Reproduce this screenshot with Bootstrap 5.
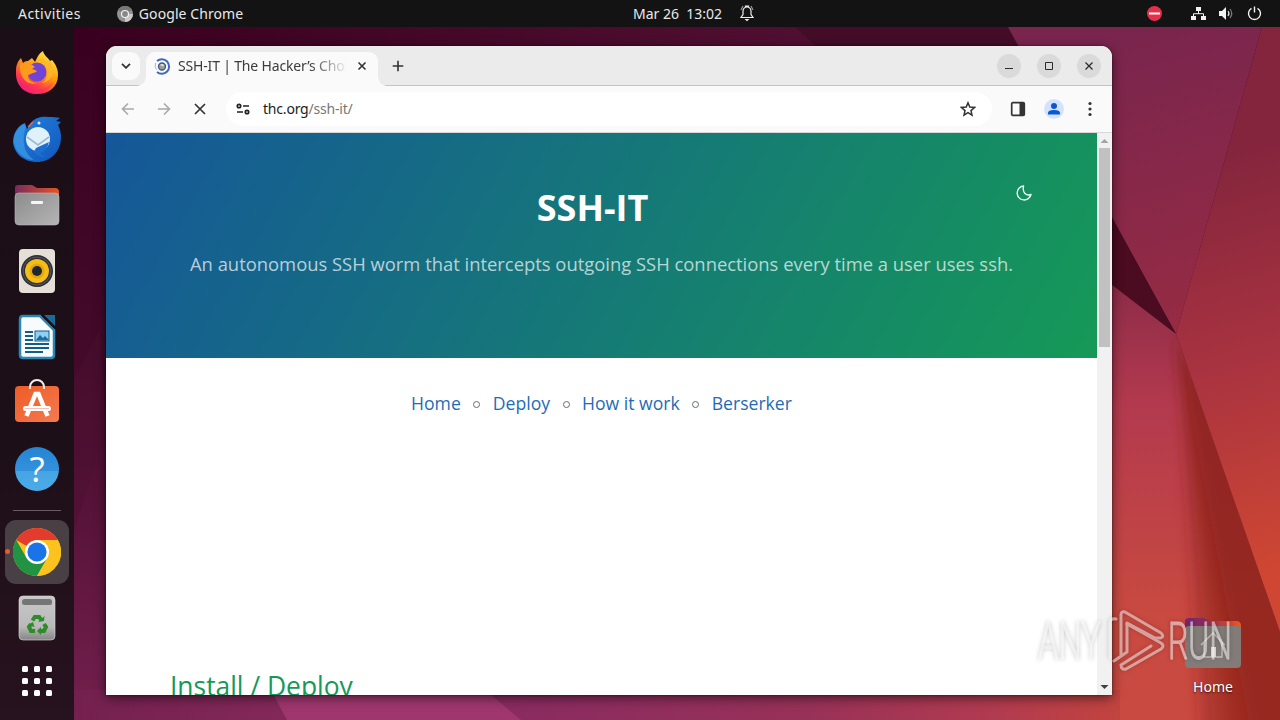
<!DOCTYPE html>
<html lang="en">
<head>
  <meta charset="UTF-8">
  <title>SSH-IT | The Hacker's Choice</title>
  <meta name="viewport" content="width=device-width, initial-scale=1" />
  <link href="https://cdn.jsdelivr.net/npm/bootstrap@5.3.0/dist/css/bootstrap.min.css" rel="stylesheet" />
  <style>
    body {
      height: 720px;
      overflow: hidden;
      background-color: #3a0722;
      font-family: 'Noto Sans', 'Open Sans', sans-serif;
      font-size: 14px;
    }
    svg {
      display: block;
      flex-shrink: 0;
    }
    .wallpaper {
      position: absolute;
      inset: 0;
    }
    .topbar {
      height: 27px;
      background-color: #131313;
      color: #e9e9e9;
      position: relative;
      padding: 0 18px;
    }
    .activities {
      letter-spacing: .45px;
    }
    .app-menu {
      margin-left: 36px;
      gap: 6px;
      letter-spacing: .08px;
    }
    .clock {
      position: absolute;
      left: 633px;
      top: 0;
      height: 26px;
      white-space: pre;
    }
    .clock svg {
      margin-left: 17px;
    }
    .tray {
      gap: 12px;
    }
    .tray-dnd {
      margin-right: 17px;
    }
    .dock {
      width: 74px;
      height: 693px;
      padding-top: 13px;
      background: linear-gradient(#1b0e17, #1d0f17 60%, #27121f);
      position: relative;
    }
    .dock-item {
      height: 66px;
      width: 74px;
    }
    .dock-line {
      width: 48px;
      height: 1px;
      background-color: #655d63;
      margin: 8px 0;
    }
    .dock-apps {
      height: 60px;
    }
    .dock-active {
      position: relative;
    }
    .dock-active .tile {
      width: 64px;
      height: 64px;
      border-radius: 11px;
      background-color: #494045;
    }
    .dock-active::before {
      content: "";
      position: absolute;
      left: 5px;
      top: 30px;
      width: 5px;
      height: 5px;
      border-radius: 50%;
      background-color: #f0562c;
    }
    .help-disc {
      width: 44px;
      height: 44px;
      border-radius: 50%;
      background: linear-gradient(#2585d3, #3390dc 55%, #46a4e3 55%, #4babe9);
      color: #fff;
      font-family: 'Open Sans', sans-serif;
      font-size: 35px;
      line-height: 44px;
    }
    .browser {
      position: absolute;
      left: 106px;
      top: 46px;
      width: 1006px;
      height: 649px;
      border-radius: 11px 11px 0 0;
      background-color: #fff;
      box-shadow: 0 3px 12px rgba(0, 0, 0, .55), 0 0 2px rgba(0, 0, 0, .6);
    }
    .tabstrip {
      height: 40px;
      background-color: #ebebeb;
      border-bottom: 1px solid #c4c4c4;
      padding: 0 11px 0 6px;
    }
    .tab-search {
      width: 28px;
      height: 28px;
      border-radius: 9px;
      background-color: #fafafa;
    }
    .active-tab {
      width: 232px;
      height: 34px;
      margin: 6px 0 -1px 6px;
      padding: 0 11px 6px 8px;
      border-radius: 9px 9px 0 0;
      background-color: #fafafa;
      position: relative;
    }
    .active-tab::before,
    .active-tab::after {
      content: "";
      position: absolute;
      bottom: 0;
      width: 9px;
      height: 9px;
    }
    .active-tab::before {
      left: -9px;
      background: radial-gradient(circle at 0 0, transparent 8.5px, #fafafa 9px);
    }
    .active-tab::after {
      right: -9px;
      background: radial-gradient(circle at 100% 0, transparent 8.5px, #fafafa 9px);
    }
    .tab-title {
      width: 168px;
      margin-left: 7px;
      padding-bottom: 2px;
      overflow: hidden;
      white-space: nowrap;
      color: #3c3c3c;
      letter-spacing: -.17px;
      -webkit-mask-image: linear-gradient(to right, #000 132px, transparent 170px);
    }
    .new-tab {
      margin-left: 14px;
    }
    .win-btn {
      width: 24px;
      height: 24px;
      border-radius: 50%;
      background-color: #dadada;
    }
    .toolbar {
      height: 47px;
      background-color: #fafafa;
      border-bottom: 1px solid #d8d8d8;
      padding: 0 14px;
    }
    .nav-icons {
      gap: 20px;
    }
    .address {
      width: 766px;
      height: 34px;
      margin: 0 18px;
      border-radius: 17px;
      background-color: #fff;
      padding: 0 16px 0 10px;
      color: #777;
    }
    .address span {
      margin-left: 13px;
      padding-bottom: 2px;
      letter-spacing: -.2px;
    }
    .address b {
      font-weight: 400;
      color: #1b1b1b;
    }
    .profile {
      margin-left: 18px;
    }
    .viewport {
      height: 562px;
    }
    .site {
      width: 991px;
      overflow: hidden;
      font-family: 'Open Sans', sans-serif;
    }
    .site-header {
      height: 225px;
      background: linear-gradient(120deg, #155799, #159957);
      color: #fff;
      padding-top: 48px;
      position: relative;
    }
    .site-header h1 {
      font-size: 36px;
      font-weight: 700;
      line-height: 54px;
      margin: 0 18px 0 0;
    }
    .site-header p {
      font-size: 18.4px;
      line-height: 28px;
      margin-top: 15px;
      color: rgba(255, 255, 255, .7);
    }
    .theme-toggle {
      position: absolute;
      left: 909px;
      top: 51px;
    }
    .site-nav {
      padding-top: 31px;
      font-size: 17.6px;
      line-height: 28px;
    }
    .site-nav a {
      color: #1e6bb8;
      text-decoration: none;
    }
    .dot {
      width: 7px;
      height: 7px;
      border: 1px solid #606c71;
      border-radius: 50%;
      margin: 2px 12.5px 0;
    }
    .site h2 {
      font-size: 26.4px;
      font-weight: 400;
      color: #159957;
      line-height: 36px;
      margin: 251px 0 0 64px;
    }
    .scroller {
      width: 15px;
      background-color: #f1f1f1;
    }
    .thumb {
      width: 11px;
      height: 199px;
      background-color: #c1c1c1;
    }
    .desktop-icon {
      position: absolute;
      left: 1173px;
      top: 615px;
      width: 80px;
      gap: 7px;
      color: #fff;
      text-shadow: 0 1px 2px rgba(0, 0, 0, .7);
    }
    .watermark {
      position: absolute;
      left: 1030px;
      top: 600px;
      filter: drop-shadow(0 0 2px rgba(0, 0, 0, .4));
    }
  </style>
</head>
<body>
<svg class="wallpaper" width="1280" height="720">
  <defs>
    <linearGradient id="base" x1="0" y1="0" x2="0" y2="1">
      <stop offset="0" stop-color="#39001f" />
      <stop offset=".5" stop-color="#430a2a" />
      <stop offset="1" stop-color="#74204e" />
    </linearGradient>
    <linearGradient id="topEdge">
      <stop offset="0" stop-color="#39001f" />
      <stop offset="1" stop-color="#521033" />
    </linearGradient>
    <linearGradient id="upper" gradientUnits="userSpaceOnUse" x1="1110" y1="40" x2="1190" y2="330">
      <stop offset="0" stop-color="#7a254e" />
      <stop offset="1" stop-color="#962b43" />
    </linearGradient>
    <linearGradient id="right" gradientUnits="userSpaceOnUse" x1="1200" y1="160" x2="1310" y2="560">
      <stop offset="0" stop-color="#84253d" />
      <stop offset=".5" stop-color="#a93340" />
      <stop offset="1" stop-color="#cf4732" />
    </linearGradient>
    <linearGradient id="lower" gradientUnits="userSpaceOnUse" x1="1130" y1="290" x2="1130" y2="620">
      <stop offset="0" stop-color="#8f2c49" />
      <stop offset=".35" stop-color="#b33a4e" />
      <stop offset="1" stop-color="#c94a40" />
    </linearGradient>
    <linearGradient id="bottom">
      <stop offset="0" stop-color="#74204e" />
      <stop offset=".2" stop-color="#83295a" />
      <stop offset=".45" stop-color="#8b2c60" />
      <stop offset=".7" stop-color="#983158" />
      <stop offset=".88" stop-color="#b13b50" />
      <stop offset="1" stop-color="#c2443f" />
    </linearGradient>
    <clipPath id="foldClip">
      <path d="M1176 334L1112 300v420h168v-88z" />
    </clipPath>
    <filter id="soft" filterUnits="userSpaceOnUse" x="1100" y="300" width="300" height="500">
      <feGaussianBlur stdDeviation="6" />
    </filter>
  </defs>
  <rect width="1280" height="720" fill="url(#base)" />
  <rect x="74" y="27" width="780" height="30" fill="url(#topEdge)" />
  <path d="M106 430L74 530V380L100 330z" fill="#4c1030" opacity=".5" />
  <path d="M795 27h215l166 307-340-270z" fill="#430d27" />
  <path d="M1008 27h254l-86 307z" fill="url(#upper)" />
  <path d="M1262 27h18v605l-104-298z" fill="url(#right)" />
  <path d="M1090 180l86 154-86-66z" fill="#4b0b20" />
  <path d="M1176 334L1090 268V720h190v-88z" fill="url(#lower)" />
  <!-- shadow on the left side of the fold, built up in wedges -->
  <g clip-path="url(#foldClip)">
    <g fill="#8a2018" filter="url(#soft)">
      <path d="M1176 334l24 426h160v-70z" opacity=".3" />
      <path d="M1176 334l40 426h150v-70z" opacity=".3" />
      <path d="M1176 334l60 426h130v-70z" opacity=".35" />
      <path d="M1176 334l80 426h110v-70z" opacity=".4" />
    </g>
  </g>
  <rect x="74" y="690" width="1046" height="30" fill="url(#bottom)" />
  <path d="M271 690l16 30h234l-36-30z" fill="#a0366e" />
</svg>

<div class="topbar d-flex align-items-center">
  <span class="activities">Activities</span>
  <div class="app-menu d-flex align-items-center">
    <svg width="16" height="16" viewBox="0 0 16 16">
      <circle cx="8" cy="8" r="8" fill="#929292" />
      <path d="M8 8L1 4a8 8 0 0 1 14 0z" fill="#777" />
      <path d="M8 8h8a8 8 0 0 1-8 8z" fill="#c9c9c9" />
      <circle cx="8" cy="8" r="3.5" fill="#888" stroke="#f2f2f2" stroke-width="1.2" />
    </svg>
    <span>Google Chrome</span>
  </div>
  <div class="clock d-flex align-items-center"><span>Mar 26  13:02</span><svg width="16" height="18" viewBox="0 0 16 18" fill="none" stroke="#eee" stroke-width="1.2">
      <path d="M2 13.5h12l-2-3V7a4 4 0 0 0-8 0v3.5zM6.500 3V2h3v1" />
      <path d="M7 15.500h2L8 16.500z" fill="#eee" />
      <path d="M4 2L2 6M12 2l2 4" opacity=".6" />
    </svg></div>
  <div class="tray d-flex align-items-center ms-auto">
    <svg class="tray-dnd" width="15" height="15" viewBox="0 0 15 15">
      <circle cx="7.5" cy="7.5" r="7.5" fill="#e4304a" />
      <path d="M2 6.500h11v2H2z" fill="#fff" />
    </svg>
    <svg width="15" height="15" viewBox="0 0 15 15" fill="#f2f2f2">
      <path d="M5 1h5v4H5zM0 10h5v4H0zM10 10h5v4h-5z" />
      <path d="M7.500 5v3M2.500 10V7.700h10V10" fill="none" stroke="#f2f2f2" />
    </svg>
    <svg width="17" height="15" viewBox="-1 0 17 15">
      <path d="M0 5h3l4-4v13l-4-4H0z" fill="#f2f2f2" />
      <path d="M9 5q2 2.500 0 5" fill="none" stroke="#ddd" stroke-width="1.2" />
      <path d="M11 3q3.500 4.500 0 9" fill="none" stroke="#777" stroke-width="1.2" />
    </svg>
    <svg width="15" height="15" viewBox="0 0 15 15" fill="none" stroke="#f2f2f2" stroke-width="1.4">
      <path d="M4.500 2.300a6 6 0 1 0 6 0M7.500 .5v6" />
    </svg>
  </div>
</div>

<div class="dock d-flex flex-column align-items-center">
  <div class="dock-item d-flex align-items-center justify-content-center">
    <svg width="46" height="46" viewBox="0 0 46 46">
      <defs>
        <linearGradient id="fox" x1=".8" y1="0" x2=".2" y2="1">
          <stop offset="0" stop-color="#fff044" />
          <stop offset=".45" stop-color="#ff980e" />
          <stop offset=".75" stop-color="#ff3750" />
          <stop offset="1" stop-color="#e31587" />
        </linearGradient>
      </defs>
      <path d="M2 21C2 15 4 11 7 8l2 5c2-2 4-2 5-2l4-3 3 4c2-4 4-9 8-11 1 5 5 6 7 10l2-1c4 5 6 9 6 15 0 12-9 19-21 19S1 36 2 21z" fill="url(#fox)" />
      <circle cx="23" cy="22" r="9.500" fill="#7342d6" />
      <path d="M6 14c5-2 11-1 15 3l-3 2c2 1 4 1 5 2-3 3-8 2-9 5 0 4 4 7 9 7-9 3-18-4-17-19z" fill="#ff9a1c" />
      <path d="M24 13c5-2 9 2 9 7 1 6-1 11-5 13 10-1 14-12 8-22-3 1-7-1-8-3-2 1-3 3-4 5z" fill="#ffb62a" opacity=".85" />
      <path d="M3 29c5 14 25 16 36 3-4 13-31 17-36-3z" fill="#ff2c62" opacity=".5" />
    </svg>
  </div>
  <div class="dock-item d-flex align-items-center justify-content-center">
    <svg width="50" height="48" viewBox="0 0 50 48">
      <defs>
        <linearGradient id="bird" x1="0" y1="0" x2="1" y2="1">
          <stop offset="0" stop-color="#2482dd" />
          <stop offset="1" stop-color="#1057bd" />
        </linearGradient>
      </defs>
      <path d="M18 9c4-6 11-8 18-7 5 0 9 0 12 1l-4 3 5 1-3 3c2 4 3 8 3 12 0 15-11 25-24 25C11 47 2 38 1 27c0-8 4-16 12-19l2 6z" fill="url(#bird)" />
      <path d="M12 9C5 13 1 20 2 28c2 10 11 17 20 17-6-4-9-9-10-16-1-6 0-12 2-17z" fill="#3b9ae6" opacity=".75" />
      <circle cx="26" cy="24" r="12" fill="#e0f1fb" />
      <path d="M15 22l11 8 11-8" fill="none" stroke="#9dbccf" stroke-width="1.800" />
      <path d="M24 33l13-6q-2 9-9 11 2 3 6 4-7 1-12-5z" fill="#1c6fcf" />
      <circle cx="27" cy="8" r="1.500" fill="#d9efff" />
      <path d="M16 12l5-5" stroke="#d36c7a" stroke-width="1.500" />
    </svg>
  </div>
  <div class="dock-item d-flex align-items-center justify-content-center">
    <svg width="46" height="42" viewBox="0 0 46 42">
      <defs>
        <linearGradient id="tabfold">
          <stop offset="0" stop-color="#7a2a5e" />
          <stop offset="1" stop-color="#e95420" />
        </linearGradient>
        <linearGradient id="grey" x1="0" y1="0" x2="1" y2="1">
          <stop offset="0" stop-color="#8c8c8c" />
          <stop offset="1" stop-color="#b5b5b5" />
        </linearGradient>
      </defs>
      <path d="M1 4q0-3 3-3h14l5 3h18q4 0 4 4v10H1z" fill="url(#tabfold)" />
      <rect x="1" y="9" width="44" height="32" rx="4" fill="url(#grey)" stroke="#bbb" stroke-width=".6" />
      <rect x="17" y="17" width="12" height="3" rx="1" fill="#f5f5f5" />
    </svg>
  </div>
  <div class="dock-item d-flex align-items-center justify-content-center">
    <svg width="38" height="46" viewBox="0 0 38 46">
      <rect x="1" y="1" width="36" height="44" rx="4" fill="#e5e0d7" />
      <circle cx="19" cy="23" r="16" fill="#2e3035" />
      <circle cx="19" cy="23" r="14" fill="none" stroke="#5a5b61" />
      <circle cx="19" cy="23" r="12" fill="#f4bd18" />
      <circle cx="19" cy="23" r="7.500" fill="#e3a90c" />
      <circle cx="19" cy="23" r="5" fill="#22252b" />
    </svg>
  </div>
  <div class="dock-item d-flex align-items-center justify-content-center">
    <svg width="38" height="46" viewBox="0 0 38 46">
      <path d="M5 2h17l14 14v25q0 3-3 3H5q-3 0-3-3V5q0-3 3-3z" fill="#f7fbfd" stroke="#2a86b3" stroke-width="2.500" />
      <path d="M24 1l13 13" stroke="#1b0e17" stroke-width="2" />
      <path d="M26 1h11v11z" fill="#1d6a92" />
      <path d="M7 18h8M7 22h8M7 26h8M7 30h24M7 34h24M7 38h18" stroke="#155c89" stroke-width="1.800" />
      <rect x="17" y="17" width="14" height="10" fill="#8fd0f5" stroke="#155c89" />
      <path d="M18 26l4-5 3 3 2-2 4 4z" fill="#1c6c9e" />
    </svg>
  </div>
  <div class="dock-item d-flex align-items-center justify-content-center pb-1">
    <svg width="46" height="46" viewBox="0 0 46 46">
      <defs>
        <linearGradient id="bag" x1="0" y1="0" x2="1" y2="1">
          <stop offset="0" stop-color="#ee5c26" />
          <stop offset="1" stop-color="#f47a50" />
        </linearGradient>
      </defs>
      <rect x="1" y="8" width="44" height="36" rx="4" fill="url(#bag)" />
      <path d="M16 11V9a7 7 0 0 1 14 0v2" fill="none" stroke="#f4ece8" stroke-width="2" />
      <path d="M12.500 38l9-22h3l9 22" fill="none" stroke="#fff" stroke-width="4.500" />
      <rect x="9" y="28" width="28" height="5" rx="2.500" fill="#fff" />
      <path d="M11 30.500h24" stroke="#f5a68b" stroke-width=".7" />
    </svg>
  </div>
  <div class="dock-item d-flex align-items-center justify-content-center">
    <div class="help-disc text-center">?</div>
  </div>
  <div class="dock-line"></div>
  <div class="dock-item dock-active d-flex align-items-center justify-content-center">
    <div class="tile d-flex align-items-center justify-content-center">
      <svg width="48" height="48" viewBox="0 0 48 48">
        <circle cx="24" cy="24" r="24" fill="#fcc31e" />
        <path d="M24 24L3.200 12a24 24 0 0 1 41.600 0z" fill="#e33b2e" />
        <path d="M13.600 30L3.200 12A24 24 0 0 0 24 48l10.400-18z" fill="#229342" />
        <path d="M24 12h20.800a24 24 0 0 1-20.800 36l10.400-18z" fill="#fcc31e" />
        <circle cx="24" cy="24" r="12" fill="#fff" />
        <circle cx="24" cy="24" r="9.600" fill="#1a73e8" />
      </svg>
    </div>
  </div>
  <div class="dock-item d-flex align-items-center justify-content-center">
    <svg width="38" height="46" viewBox="0 0 38 46">
      <defs>
        <linearGradient id="bin" x1="0" y1="0" x2="0" y2="1">
          <stop offset="0" stop-color="#c8c8c8" />
          <stop offset=".7" stop-color="#b9b9b9" />
          <stop offset="1" stop-color="#858585" />
        </linearGradient>
      </defs>
      <rect x="1" y="1" width="36" height="44" rx="4" fill="url(#bin)" stroke="#ddd" stroke-width=".6" />
      <rect x="4" y="4" width="30" height="6" rx="2.500" fill="#757575" />
      <g fill="none" stroke="#2e8b2a" stroke-width="4">
        <path d="M14.500 25.500l2.300-3.500h4.400l2 3" />
        <path d="M26 29l2 3-2 4h-4" />
        <path d="M17 36h-4l-2-4 2-3" />
      </g>
      <path d="M20 27l6-1 .5-5zM23 32v8l-4-4zM10 30l5-3 1.500 5z" fill="#2e8b2a" />
    </svg>
  </div>
  <div class="dock-item dock-apps d-flex align-items-center justify-content-center">
    <svg width="30" height="30" viewBox="0 0 30 30" fill="#fff">
      <rect width="6" height="6" rx="1.5" />
      <rect x="12" width="6" height="6" rx="1.5" />
      <rect x="24" width="6" height="6" rx="1.5" />
      <rect y="12" width="6" height="6" rx="1.5" />
      <rect x="12" y="12" width="6" height="6" rx="1.5" />
      <rect x="24" y="12" width="6" height="6" rx="1.5" />
      <rect y="24" width="6" height="6" rx="1.5" />
      <rect x="12" y="24" width="6" height="6" rx="1.5" />
      <rect x="24" y="24" width="6" height="6" rx="1.5" />
    </svg>
  </div>
</div>

<!-- Browser window -->
<div class="browser overflow-hidden">
  <div class="tabstrip d-flex align-items-center">
    <div class="tab-search d-flex align-items-center justify-content-center">
      <svg width="10" height="6" viewBox="0 0 10 6" fill="none" stroke="#333" stroke-width="1.8"><path d="M1 .8l4 4 4-4" /></svg>
    </div>
    <div class="active-tab d-flex align-items-center align-self-end">
      <svg width="17" height="17" viewBox="0 0 17 17" fill="none">
        <path d="M3 3A7.300 7.300 0 1 1 3 14" stroke="#4067bd" stroke-width="2" />
        <path d="M1.500 5q-1 4 1 6.500" stroke="#9bb0dc" />
        <circle cx="8" cy="8.500" r="3.500" fill="#9a9c96" stroke="#3d5790" stroke-width="1.300" />
        <path d="M6 7q2-2 4 0l-1 1.500z" fill="#e6e4d0" />
      </svg>
      <div class="tab-title">SSH-IT | The Hacker’s Choice</div>
      <svg class="ms-auto" width="10" height="10" viewBox="0 0 10 10" stroke="#333" stroke-width="1.6"><path d="M1.500 1.500l7 7M8.500 1.500l-7 7" /></svg>
    </div>
    <svg class="new-tab" width="12" height="12" viewBox="0 0 12 12" stroke="#333" stroke-width="1.6"><path d="M6 .7v10.600M.7 6h10.600" /></svg>
    <div class="d-flex ms-auto gap-3">
      <div class="win-btn d-flex align-items-center justify-content-center">
        <svg width="10" height="10" stroke="#2b2b2b"><path d="M1 7.500h8" /></svg>
      </div>
      <div class="win-btn d-flex align-items-center justify-content-center">
        <svg width="10" height="10" stroke="#2b2b2b" fill="none"><path d="M1.500 1.500h7v7h-7z" /></svg>
      </div>
      <div class="win-btn d-flex align-items-center justify-content-center">
        <svg width="10" height="10" stroke="#2b2b2b" stroke-width="1.3"><path d="M1.500 1.500l7 7M8.500 1.500l-7 7" /></svg>
      </div>
    </div>
  </div>
  <div class="toolbar d-flex align-items-center">
    <div class="nav-icons d-flex align-items-center">
      <svg width="16" height="14" viewBox="0 0 16 14" fill="none" stroke="#a9a9a9" stroke-width="1.6"><path d="M14 7H2.500M8 1.500L2.500 7 8 12.500" /></svg>
      <svg width="16" height="14" viewBox="0 0 16 14" fill="none" stroke="#a9a9a9" stroke-width="1.6"><path d="M2 7h11.500M8 1.500L13.500 7 8 12.500" /></svg>
      <svg width="16" height="12" viewBox="-2 0 16 12" stroke="#333" stroke-width="1.7"><path d="M1 1l10 10M11 1L1 11" /></svg>
    </div>
    <div class="address d-flex align-items-center">
      <svg width="14" height="12" viewBox="0 0 14 12" fill="none" stroke="#222" stroke-width="1.7">
        <circle cx="3" cy="3" r="1.7" />
        <circle cx="11" cy="9" r="1.7" />
        <path d="M7 3h6M1 9h6" />
      </svg>
      <span><b>thc.org</b>/ssh-it/</span>
      <svg class="ms-auto" width="16" height="16" viewBox="0 0 16 16" fill="none" stroke="#333" stroke-width="1.5"><path d="M8 1.800l1.800 4.300 4.700.4-3.500 3.100 1 4.500-4-2.400-4 2.400 1-4.500L1.500 6.500l4.700-.4z" /></svg>
    </div>
    <svg width="16" height="16" viewBox="0 0 16 16"><rect x="1.700" y="1.700" width="12.600" height="12.600" rx="1" fill="none" stroke="#333" stroke-width="1.7" /><path d="M9.500 1.500H14v13H9.500z" fill="#333" /></svg>
    <svg class="profile" width="20" height="20" viewBox="0 0 20 20">
      <circle cx="10" cy="10" r="10" fill="#d3e3fd" />
      <circle cx="10" cy="7" r="3" fill="#0b57d0" />
      <path d="M4 15.500v-1.500q0-3 6-3t6 3v1.500z" fill="#0b57d0" />
    </svg>
    <svg class="ms-auto" width="16" height="16" viewBox="0 0 16 16" fill="#333"><circle cx="8" cy="2.500" r="1.600" /><circle cx="8" cy="8" r="1.600" /><circle cx="8" cy="13.500" r="1.600" /></svg>
  </div>
  <div class="viewport d-flex">
    <div class="site">
      <header class="site-header text-center">
        <h1>SSH-IT</h1>
        <p>An autonomous SSH worm that intercepts outgoing SSH connections every time a user uses ssh.</p>
        <svg class="theme-toggle" width="18" height="18" viewBox="0 0 18 18" fill="none" stroke="#e6fff4" stroke-width="1.4" stroke-linejoin="round">
          <path d="M8.500 2A7 7 0 1 0 16 10.500Q12.500 12 10 9.500T8.500 2z" />
        </svg>
      </header>
      <nav class="site-nav d-flex align-items-center justify-content-center">
        <a href="#">Home</a><span class="dot"></span>
        <a href="#">Deploy</a><span class="dot"></span>
        <a href="#">How it work</a><span class="dot"></span>
        <a href="#">Berserker</a>
      </nav>
      <h2>Install / Deploy</h2>
    </div>
    <div class="scroller d-flex flex-column align-items-center">
      <svg width="15" height="15"><path d="M3.500 10h8l-4-4z" fill="#a3a3a3" /></svg>
      <div class="thumb"></div>
      <svg class="mt-auto" width="15" height="15"><path d="M3.500 5h8l-4 4z" fill="#404040" /></svg>
    </div>
  </div>
</div>

<div class="desktop-icon d-flex flex-column align-items-center">
  <svg width="56" height="54" viewBox="0 0 56 54">
    <defs>
      <linearGradient id="homefold">
        <stop offset="0" stop-color="#762572" />
        <stop offset=".35" stop-color="#8c2b5c" />
        <stop offset="1" stop-color="#f2561d" />
      </linearGradient>
    </defs>
    <path d="M0 7q0-4 4-4h15l6 3h26q5 0 5 5v10H0z" fill="url(#homefold)" />
    <rect y="11" width="56" height="42" rx="4" fill="#827b78" />
    <path d="M16 30l12-12 12 12M19 28v14h18V28" fill="none" stroke="#c9bcb9" stroke-width="1.5" />
    <path d="M26 32h5v10h-5z" fill="#e6dedc" />
  </svg>
  <span>Home</span>
</div>

<svg class="watermark" width="210" height="84" viewBox="0 0 210 84">
  <g fill="#fff" stroke="#fff" stroke-width=".9" font-family="Roboto" font-weight="300" font-size="51" opacity=".55">
    <text x="8" y="59" textLength="63" lengthAdjust="spacingAndGlyphs">ANY</text>
    <text x="138" y="59" textLength="64" lengthAdjust="spacingAndGlyphs">RUN</text>
  </g>
  <g fill="none" stroke="#fff" stroke-width="3" stroke-linejoin="round" stroke-linecap="round" opacity=".5">
    <path d="M91 55V15q0-4 4-3l36 21q4 4-1 5h-5L97 23v29l-13 9" />
    <path d="M97 24l34 19q4 3 0 6L96 69q-5 1-5-4l30-19" />
    <path d="M86 19q-6-1-6 4v34" />
  </g>
</svg>

<script src="https://cdn.jsdelivr.net/npm/bootstrap@5.3.0/dist/js/bootstrap.bundle.min.js"></script>
</body>
</html>
